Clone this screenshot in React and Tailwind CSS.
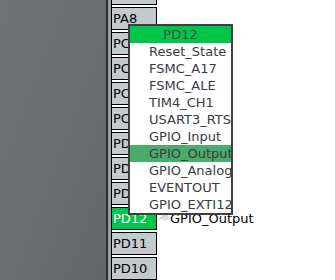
import React from 'react';

const pins = ['', 'PA8', 'PC9', 'PC8', 'PC7', 'PC6', 'PD15', 'PD14', 'PD13', 'PD12', 'PD11', 'PD10'];

const items = [
  'Reset_State',
  'FSMC_A17',
  'FSMC_ALE',
  'TIM4_CH1',
  'USART3_RTS',
  'GPIO_Input',
  'GPIO_Output',
  'GPIO_Analog',
  'EVENTOUT',
  'GPIO_EXTI12',
];

export default function App() {
  return (
    <div
      className="relative flex w-[335px] h-[280px] overflow-hidden bg-white text-[13px]"
      style={{ fontFamily: '"DejaVu Sans", sans-serif' }}
    >
      <div className="w-[106px] shrink-0 bg-gradient-to-br from-[#707474] to-[#636767]" />
      <div className="w-[2px] shrink-0 bg-[#2e2f2f]" />
      <div className="w-[3px] shrink-0 bg-[#9a9d9d]" />

      <div className="flex-1 border-l border-black">
        <div className="flex flex-col gap-[2px] mt-[-18px]">
          {pins.map((p, i) => {
            const active = p === 'PD12';
            return (
              <div key={i} className="flex items-center h-[23px]">
                <div
                  className={`w-[45px] h-[23px] shrink-0 border-y border-r border-black flex items-center pl-[1px] leading-none ${
                    active ? 'bg-[#00c54b] text-white' : 'bg-[#c2cacd] text-black'
                  }`}
                >
                  {p}
                </div>
                {active && (
                  <div className="flex items-center">
                    <svg width="13" height="12" viewBox="0 0 13 12" className="mb-[6px]">
                      <circle cx="8" cy="7" r="3.5" fill="#dcdcdc" />
                      <path d="M2 10 L5 7" stroke="#b4b4b4" strokeWidth="1" />
                    </svg>
                    <span className="text-black leading-none">GPIO_Output</span>
                  </div>
                )}
              </div>
            );
          })}
        </div>
      </div>

      <div className="absolute left-[128px] top-[24px] w-[105px] border-2 border-[#3f3f3f] bg-white overflow-hidden">
        <div className="h-[17px] bg-[#00c54b] text-[#4a4f4c] text-center leading-[17px]">PD12</div>
        {items.map((it) => (
          <div
            key={it}
            className={`h-[17px] leading-[17px] pl-[19px] whitespace-nowrap text-[#3a3a44] ${
              it === 'GPIO_Output' ? 'bg-[#4aac6a]' : ''
            }`}
          >
            {it}
          </div>
        ))}
      </div>
    </div>
  );
}
